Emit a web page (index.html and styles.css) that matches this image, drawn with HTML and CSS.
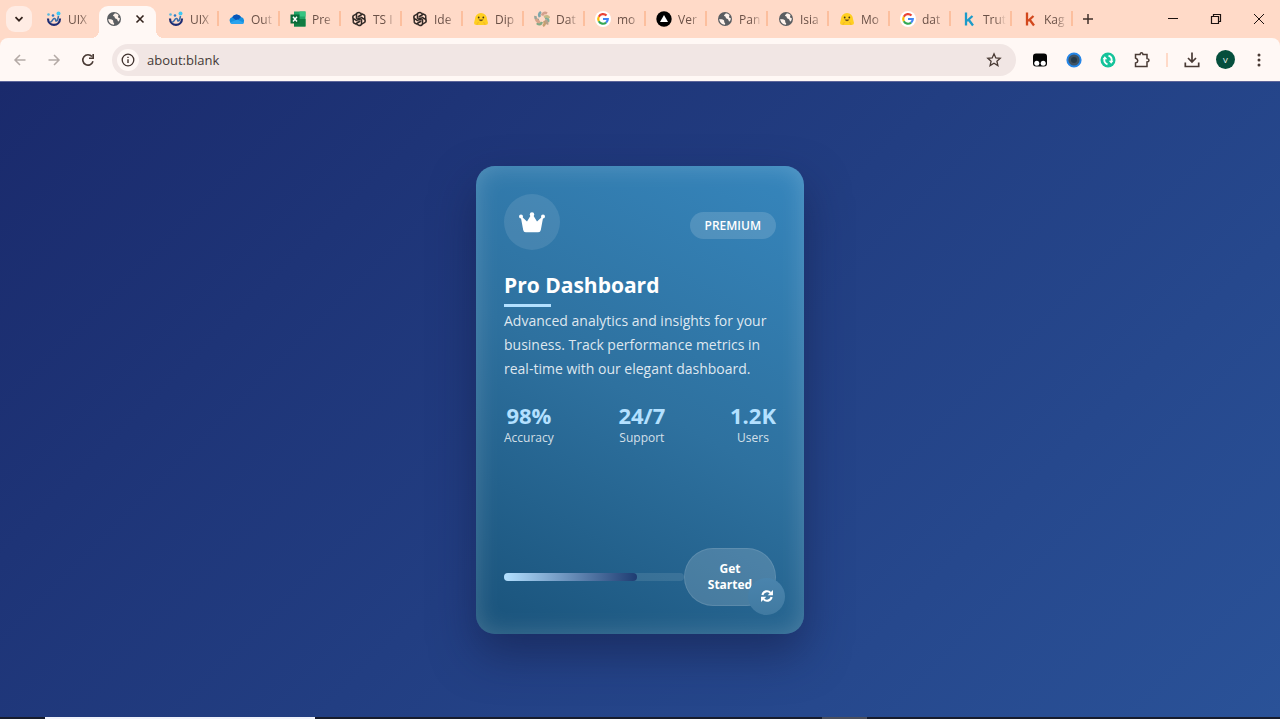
FILE: index.html
```html
<!DOCTYPE html>
<html lang="en">
<head>
<meta charset="utf-8">
<title>Pro Dashboard</title>
<link rel="stylesheet" href="styles.css">
</head>
<body>
<svg class="sprite" aria-hidden="true">
  <symbol id="uix" viewBox="0 0 16 16"><path d="M2 7.500c0 8.500 12 8.500 12 0" fill="none" stroke="#1d2b72" stroke-width="2.200"/><path d="M4 11c2.500.5 2.500-4 4.500-3.500s.5 3 2 2.500 1.500-3 2-5" fill="none" stroke="#3b6ea8" stroke-width="1.600"/><circle cx="7" cy="4.500" r="1.300" fill="#2b7ac8"/><circle cx="12.500" cy="2.500" r="2" fill="#3cc8f4"/><circle cx="2.500" cy="3.500" r="1.300" fill="#56b9de"/></symbol>
  <symbol id="globe" viewBox="0 0 16 16"><circle cx="8" cy="8" r="7" fill="#5a5d61"/><path d="M2.300 8c2 .2 3.700.2 4.600 1.300.8 1-.2 1.800.9 2.600.7.500.4 1.300 0 1.900C5 13.500 2.300 11.200 2.300 8zM8.800 2.300c-.3 1.400-1.800 1.300-1.800 2.300s1.700.5 1.700 1.700S10 7.500 11 8.300s.2 2 1.500 2.200c1-1 1.300-2 1.200-3.500-1.200.2-1.700-.6-1.600-1.500.1-.8.700-.9.300-1.700-1-.900-2.300-1.400-3.600-1.500z" fill="#fff3ec"/></symbol>
  <symbol id="cloud" viewBox="0 0 16 16"><path d="M3.500 13a3.500 3.500 0 0 1-.4-6.800A5 5 0 0 1 12 6a3.700 3.700 0 0 1 1 7z" fill="#1490df"/><path d="M3.200 6.200A5 5 0 0 1 12 6L8 10z" fill="#0a55b8"/><path d="M1 11.500 8.500 8.500 15 12q-1 1-2 1H3.500q-1.600 0-2.500-1.500z" fill="#2aa3ee"/></symbol>
  <symbol id="sheet" viewBox="0 0 16 16"><path d="M4 .5h11.500v15H4z" fill="#21a366"/><path d="M9.500.5h6v5h-6z" fill="#36c481"/><path d="M4 8h11.500v7.500H4z" fill="#107c41"/><path d="M.5 3.500h9v9h-9z" fill="#0b6a37"/><path d="m3 5.700 4 4.800m0-4.800-4 4.800" stroke="#fff" stroke-width="1.400"/></symbol>
  <symbol id="knot" viewBox="0 0 16 16"><g fill="none" stroke="#2d2623" stroke-width="1.100"><circle cx="8" cy="8" r="6.200" stroke-width=".9"/><path d="M5.300 8V4q0-2.800 2.800-2.800L11 3.600 8 5.300v3"/><path d="M5.300 8V4q0-2.800 2.800-2.800L11 3.600 8 5.300v3" transform="rotate(60 8 8)"/><path d="M5.300 8V4q0-2.800 2.800-2.800L11 3.600 8 5.300v3" transform="rotate(120 8 8)"/><path d="M5.300 8V4q0-2.800 2.800-2.800L11 3.600 8 5.300v3" transform="rotate(180 8 8)"/><path d="M5.300 8V4q0-2.800 2.800-2.800L11 3.600 8 5.300v3" transform="rotate(240 8 8)"/><path d="M5.300 8V4q0-2.800 2.800-2.800L11 3.600 8 5.300v3" transform="rotate(300 8 8)"/></g></symbol>
  <symbol id="hug" viewBox="0 0 16 16"><path d="M2 8a6 6 0 0 1 12 0l1 4q0 2-2.500 2h-9Q1 14 1 12z" fill="#ffcf20"/><circle cx="5.700" cy="6.500" r=".9" fill="#453519"/><circle cx="10.300" cy="6.500" r=".9" fill="#453519"/><path d="M5.500 8.500q2.500 3.500 5 0z" fill="#6d4d1c"/><path d="M4 14q0-3 2-2.500M12 14q0-3-2-2.500" stroke="#f4b82b" fill="none"/></symbol>
  <symbol id="swirl" viewBox="0 0 16 16"><g fill="none" stroke-width="2.600"><path d="M8 4.500q2-4 5-2" stroke="#d3a08c"/><path d="M11 7q4 0 3 4" stroke="#7eae9c"/><path d="M10 10q2 3-1 5" stroke="#c6a070"/><path d="M8 11q-2 4-5 1" stroke="#82aa86"/><path d="M5 9Q1 9 1.500 5" stroke="#9aa69b"/><path d="M6 6Q4 3 7 1" stroke="#7ba6ac"/><path d="M10 6q4-2 5 1" stroke="#c6ba86"/><path d="M6 11q-3 0-4-3" stroke="#d7a48a"/><path d="M11 9.500q3 1 2 4" stroke="#b7a08a"/></g></symbol>
  <symbol id="google" viewBox="0 0 16 16"><circle cx="8" cy="8" r="8" fill="#fff"/><g fill="none" stroke-width="2.200"><path d="M11.500 4.600A4.800 4.800 0 0 0 3.800 5.700" stroke="#ea4335"/><path d="M3.800 5.700a4.800 4.800 0 0 0 0 4.600" stroke="#fbbc05"/><path d="M3.800 10.300a4.800 4.800 0 0 0 7.300 1.300" stroke="#34a853"/><path d="M11.100 11.600A4.800 4.800 0 0 0 12.800 8H8" stroke="#4285f4"/></g></symbol>
  <symbol id="triangle" viewBox="0 0 16 16"><circle cx="8" cy="8" r="7.700" fill="#000"/><path d="m8 4 4 7H4z" fill="#fff"/></symbol>
  <symbol id="kay" viewBox="0 0 16 16"><path d="M5 1.500v13M11.500 5 6 10m1.500-1.500 4.500 6" fill="none" stroke="currentColor" stroke-width="2.300"/></symbol>
</svg>

<header class="browser">
  <div class="tabstrip">
    <button class="tab-search" aria-label="Search tabs"><svg viewBox="0 0 10 10"><path d="m1.500 3.200 3.500 3.500 3.500-3.500" fill="none" stroke="#33231d" stroke-width="1.700"/></svg></button>
    <nav class="tabs" aria-label="Tabs">
      <a class="tab bare" href="#"><svg><use href="#uix"/></svg><span>UIX</span></a>
      <div class="tab active"><svg class="favicon"><use href="#globe"/></svg><button class="close" aria-label="Close tab"><svg viewBox="0 0 10 10"><path d="m1.500 1.500 7 7m0-7-7 7" stroke="#33231d" stroke-width="1.600"/></svg></button></div>
      <a class="tab" href="#"><svg><use href="#uix"/></svg><span>UIX</span></a>
      <a class="tab" href="#"><svg><use href="#cloud"/></svg><span>Out</span></a>
      <a class="tab" href="#"><svg><use href="#sheet"/></svg><span>Pre</span></a>
      <a class="tab" href="#"><svg><use href="#knot"/></svg><span>TS I</span></a>
      <a class="tab" href="#"><svg><use href="#knot"/></svg><span>Ide</span></a>
      <a class="tab" href="#"><svg><use href="#hug"/></svg><span>Dip</span></a>
      <a class="tab" href="#"><svg><use href="#swirl"/></svg><span>Dat</span></a>
      <a class="tab" href="#"><svg><use href="#google"/></svg><span>mo</span></a>
      <a class="tab" href="#"><svg><use href="#triangle"/></svg><span>Ver</span></a>
      <a class="tab" href="#"><svg><use href="#globe"/></svg><span>Pan</span></a>
      <a class="tab" href="#"><svg><use href="#globe"/></svg><span>Isia</span></a>
      <a class="tab" href="#"><svg><use href="#hug"/></svg><span>Mo</span></a>
      <a class="tab" href="#"><svg><use href="#google"/></svg><span>dat</span></a>
      <a class="tab" href="#"><svg class="blue"><use href="#kay"/></svg><span>Trut</span></a>
      <a class="tab" href="#"><svg class="rust"><use href="#kay"/></svg><span>Kag</span></a>
    </nav>
    <button class="new-tab" aria-label="New tab"><svg viewBox="0 0 12 12"><path d="M6 1v10M1 6h10" stroke="#40302a" stroke-width="1.500"/></svg></button>
    <div class="window-controls">
      <button aria-label="Minimize"><svg viewBox="0 0 12 12"><path d="M1 5.500h10" stroke="#1c1210"/></svg></button>
      <button aria-label="Restore"><svg viewBox="0 0 12 12"><path d="M1.500 3.500h7v7h-7zM3.500 3V1.500h7v7H9" fill="none" stroke="#1c1210" stroke-width="1.200"/></svg></button>
      <button aria-label="Close"><svg viewBox="0 0 12 12"><path d="m1 1 10 10m0-10L1 11" stroke="#1c1210"/></svg></button>
    </div>
  </div>
  <div class="toolbar">
    <div class="nav-buttons">
      <button aria-label="Back" disabled><svg viewBox="0 0 16 16"><path d="M13.500 8H3m5-5L3 8l5 5" fill="none" stroke="#b4aaa6" stroke-width="1.500"/></svg></button>
      <button aria-label="Forward" disabled><svg viewBox="0 0 16 16"><path d="M2.500 8H13M8 3l5 5-5 5" fill="none" stroke="#b4aaa6" stroke-width="1.500"/></svg></button>
      <button aria-label="Reload"><svg viewBox="0 0 16 16"><path d="M13 9.300A5.200 5.200 0 1 1 12 4.600M13.200 2v4.200H9" fill="none" stroke="#493a34" stroke-width="1.600"/></svg></button>
    </div>
    <div class="omnibox">
      <button class="site-info" aria-label="View site information"><svg viewBox="0 0 16 16"><circle cx="8" cy="8" r="5.800" fill="none" stroke="#40322e" stroke-width="1.300"/><path d="M8 7.300v3.700M8 4.700v1.400" stroke="#40322e" stroke-width="1.400"/></svg></button>
      <input type="text" value="about:blank" aria-label="Address">
      <button class="star" aria-label="Bookmark this tab"><svg viewBox="0 0 16 16"><path d="m8 1.800 1.800 4.100 4.400.4-3.300 2.900 1 4.400L8 11.300l-3.900 2.300 1-4.400-3.300-2.900 4.400-.4z" fill="none" stroke="#493a34" stroke-width="1.300"/></svg></button>
    </div>
    <div class="extensions">
      <button aria-label="Tab extension"><svg viewBox="0 0 16 16"><rect x="1" y="1.500" width="14" height="13" rx="3" fill="#050505"/><circle cx="4.800" cy="11.300" r="2.500" fill="#fff"/><circle cx="11.200" cy="11.300" r="2.500" fill="#fff"/></svg></button>
      <button aria-label="Lens extension"><svg viewBox="0 0 16 16"><circle cx="8" cy="8" r="6.600" fill="#405363" stroke="#2586e8" stroke-width="2"/><circle cx="8" cy="8" r="3" fill="#263b4a"/></svg></button>
      <button aria-label="Sync extension"><svg viewBox="0 0 16 16"><circle cx="8" cy="8" r="7.500" fill="#15c39a"/><path d="M7.500 12.300Q3.500 11 4.500 6.500M8.500 3.700q4 1.300 3 5.800" fill="none" stroke="#fff" stroke-width="1.800"/><path d="m2.500 7.300 2.300-3 2.500 3zM13.500 8.700l-2.300 3-2.500-3z" fill="#fff"/></svg></button>
      <button aria-label="Extensions"><svg viewBox="0 0 16 16"><path d="M1.500 2.500H6q.3-1.700 1.500-1.700T9 2.500h4v4q2 .2 2 1.700T13 10v4.500H1.500V11q2.300-.6 2.300-2.300T1.500 6z" fill="none" stroke="#493a34" stroke-width="1.500"/></svg></button>
      <span class="divider"></span>
      <button aria-label="Downloads"><svg viewBox="0 0 16 16"><path d="M8 .5v9M4 6l4 4 4-4M1.300 10.500v4h13.400v-4" fill="none" stroke="#493a34" stroke-width="1.700"/></svg></button>
      <button class="profile" aria-label="Profile">V</button>
      <button aria-label="Menu"><svg viewBox="0 0 16 16" fill="#493a34"><circle cx="8" cy="3" r="1.500"/><circle cx="8" cy="8" r="1.500"/><circle cx="8" cy="13" r="1.500"/></svg></button>
    </div>
  </div>
</header>

<main class="page">
  <article class="card">
    <div class="card-top">
      <div class="crown"><svg viewBox="0 0 28 24"><g fill="#fff"><path d="M2.500 5.500 9 11.500 13 5h2l4 6.500 6.500-6L22.800 20q-.3 2.300-2.600 2.300H7.800Q5.500 22.300 5.200 20z"/><circle cx="14" cy="4.500" r="2.200"/><circle cx="3" cy="6.600" r="2"/><circle cx="25" cy="6.600" r="2"/></g></svg></div>
      <span class="badge">PREMIUM</span>
    </div>
    <h1>Pro Dashboard</h1>
    <p>Advanced analytics and insights for your business. Track performance metrics in real-time with our elegant dashboard.</p>
    <dl class="stats">
      <div><dd>98%</dd><dt>Accuracy</dt></div>
      <div><dd>24/7</dd><dt>Support</dt></div>
      <div><dd>1.2K</dd><dt>Users</dt></div>
    </dl>
    <div class="card-footer">
      <div class="progress" role="progressbar" aria-label="Progress" aria-valuenow="74" aria-valuemin="0" aria-valuemax="100"><div class="fill" style="width:74%"></div></div>
      <button class="cta">Get Started</button>
    </div>
    <button class="flip" aria-label="Flip card"><svg viewBox="0 0 16 16"><path d="M2.700 6.800A5.300 5.300 0 0 1 12 4.500M13.300 9.200A5.300 5.300 0 0 1 4 11.500" fill="none" stroke="#fff" stroke-width="2.400"/><path d="M14.800 1.200v6H8.800zM1.200 14.800v-6h6z" fill="#fff"/></svg></button>
  </article>
</main>

<footer class="taskbar"><span class="task light"></span><span class="task dim"></span></footer>
</body>
</html>
```

FILE: styles.css
```css
* { box-sizing: border-box; }

body {
  margin: 0;
  min-height: 100vh;
  display: flex;
  flex-direction: column;
  font-family: "Open Sans", "Noto Sans", sans-serif;
}

button {
  display: flex;
  align-items: center;
  justify-content: center;
  padding: 0;
  border: 0;
  background: none;
  font: inherit;
  color: inherit;
  flex: none;
}

svg { display: block; flex: none; }
.sprite { position: absolute; width: 0; height: 0; }

/* Tab strip */
.browser { background: #ffdac8; }

.tabstrip {
  display: flex;
  align-items: center;
  height: 38px;
  padding-left: 6px;
}

.tab-search {
  width: 26px;
  height: 26px;
  margin-right: 4px;
  border-radius: 9px;
  background: #ffece4;
}
.tab-search svg { width: 10px; height: 10px; }

.tabs { display: flex; align-self: stretch; min-width: 0; }

.tab {
  display: flex;
  align-items: center;
  gap: 6px;
  width: 61px;
  padding-left: 10px;
  color: #6b5147;
  font-size: 12px;
  text-decoration: none;
  background: linear-gradient(#fcbf9e, #fcbf9e) right 11px / 2px 15px no-repeat;
}
.tab.bare { background: none; }
.tab > svg { width: 16px; height: 16px; }
.tab span {
  width: 26px;
  overflow: hidden;
  white-space: nowrap;
  mask-image: linear-gradient(90deg, #000 12px, transparent 23px);
}

.tab.active {
  position: relative;
  align-self: flex-end;
  height: 32px;
  width: 57px;
  margin: 0 2px;
  padding: 0 0 6px 7px;
  gap: 13px;
  border-radius: 9px 9px 0 0;
  background: #fff8f5;
}
.tab.active::before,
.tab.active::after {
  content: "";
  position: absolute;
  bottom: 0;
  width: 8px;
  height: 8px;
}
.tab.active::before { right: 100%; background: radial-gradient(circle at 0 0, transparent 8px, #fff8f5 8px); }
.tab.active::after { left: 100%; background: radial-gradient(circle at 100% 0, transparent 8px, #fff8f5 8px); }
.close svg { width: 10px; height: 10px; }

.blue { color: #1c9bc9; }
.rust { color: #d2481d; }

.new-tab { width: 30px; height: 30px; }
.new-tab svg { width: 12px; height: 12px; }

.window-controls { display: flex; margin-left: auto; }
.window-controls button { width: 43px; height: 36px; }
.window-controls svg { width: 12px; height: 12px; }

/* Toolbar */
.toolbar {
  display: flex;
  align-items: center;
  height: 43px;
  padding: 0 7px 0 6px;
  border-radius: 8px 8px 0 0;
  background: #fff8f5;
}
.toolbar svg { width: 16px; height: 16px; }

.nav-buttons { display: flex; gap: 6px; margin-right: 10px; }
.nav-buttons button { width: 28px; height: 28px; }

.omnibox {
  display: flex;
  align-items: center;
  flex: 1;
  height: 32px;
  padding: 0 14px 0 5px;
  border-radius: 16px;
  background: #f1e6e4;
}
.site-info {
  width: 22px;
  height: 22px;
  border-radius: 50%;
  background: #fff8f5;
}
.omnibox input {
  flex: 1;
  min-width: 0;
  padding: 0 8px;
  border: 0;
  background: none;
  color: #443936;
  font: 13px "Open Sans", "Noto Sans", sans-serif;
}

.extensions { display: flex; align-items: center; gap: 6px; margin-left: 10px; }
.extensions button { width: 28px; height: 28px; }
.extensions .divider { width: 2px; height: 14px; margin: 0 4px; background: #ffdac8; }
.extensions .profile {
  width: 19px;
  height: 19px;
  margin: 0 4px;
  border-radius: 50%;
  background: #064f3d;
  color: #fff;
  font-size: 8px;
}

/* Page */
.page {
  flex: 1;
  display: flex;
  align-items: center;
  justify-content: center;
  padding: 24px;
  border-top: 1px solid #5d659a;
  background: linear-gradient(135deg, #1a2a6c, #2a5298);
}

.card {
  position: relative;
  display: flex;
  flex-direction: column;
  width: 328px;
  min-height: 468px;
  padding: 28px;
  border-radius: 19px;
  background: linear-gradient(35deg, #1a5479, #2f7099 50%, #3486be);
  background: linear-gradient(30deg, #19527a, #2e719f 50%, #3686bd);
  box-shadow: 0 20px 44px rgba(18, 26, 66, 0.5), inset 0 0 24px rgba(255, 255, 255, 0.19);
  color: #fff;
}

.card-top {
  display: flex;
  align-items: center;
  justify-content: space-between;
  margin-bottom: 20px;
}
.crown {
  display: flex;
  align-items: center;
  justify-content: center;
  width: 56px;
  height: 56px;
  border-radius: 50%;
  background: rgba(255, 255, 255, 0.1);
}
.crown svg { width: 28px; height: 24px; }
.badge {
  margin-top: 8px;
  padding: 4px 15px;
  border-radius: 14px;
  background: rgba(255, 255, 255, 0.15);
  font-size: 12px;
  font-weight: 600;
  line-height: 19px;
}

.card h1 {
  align-self: flex-start;
  margin: 0 0 2px;
  padding-bottom: 6px;
  background: linear-gradient(#b3e0ff, #b3e0ff) left bottom / 47px 3px no-repeat;
  font-size: 21px;
  font-weight: 700;
  line-height: 31px;
}

.card p {
  margin: 0 0 20px;
  color: rgba(255, 255, 255, 0.85);
  font-size: 14px;
  line-height: 24px;
}

.stats { display: flex; justify-content: space-between; margin: 0; text-align: center; }
.stats dd { margin: 0; color: #b3e0ff; font-size: 22px; font-weight: 700; line-height: 28px; }
.stats dt { color: rgba(255, 255, 255, 0.8); font-size: 12px; line-height: 18px; }

.card-footer { display: flex; align-items: center; margin-top: auto; }
.progress {
  flex: 1;
  height: 8px;
  border-radius: 4px;
  background: rgba(255, 255, 255, 0.1);
}
.fill {
  height: 100%;
  border-radius: 4px;
  background: linear-gradient(90deg, #b3e0ff, #1e3c72);
}
.cta {
  width: 92px;
  padding: 12px 20px;
  border: 1px solid rgba(255, 255, 255, 0.1);
  border-radius: 29px;
  background: rgba(255, 255, 255, 0.17);
  font-size: 12px;
  font-weight: 700;
  line-height: 16px;
}
.flip {
  position: absolute;
  right: 19px;
  bottom: 19px;
  width: 37px;
  height: 37px;
  border-radius: 50%;
  background: linear-gradient(#4a84ad, #417aa1);
}
.flip svg { width: 14px; height: 14px; }

/* Taskbar edge */
.taskbar { display: flex; height: 2px; padding-left: 45px; background: #171c2c; }
.task.light { width: 270px; background: #f0f2fa; }
.task.dim { width: 45px; margin-left: 507px; background: #4b4f5c; }
```
